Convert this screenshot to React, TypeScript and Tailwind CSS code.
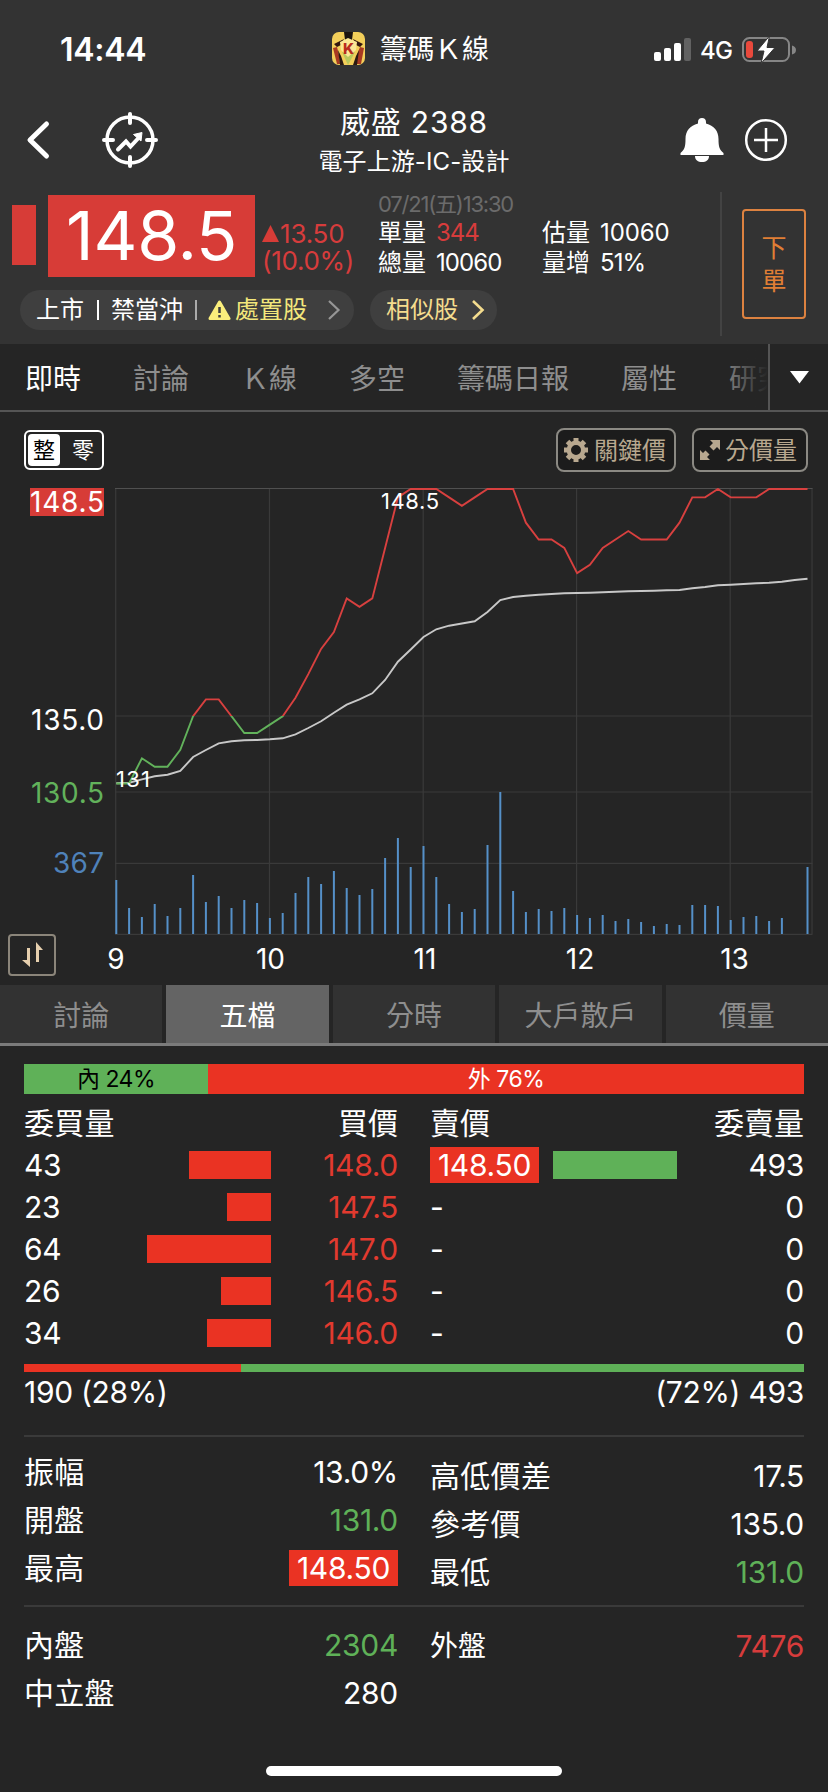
import { useState } from 'react';
import clsx from 'clsx';

const X0 = 116.3;
const STEP = 12.8;

// index 0 is 09:00, one point every five minutes
const prices = [
  131, 131, 132.5, 132, 132, 133, 135, 136, 136, 135, 134, 134, 134.5, 135, 136.1, 137.5, 139, 140,
  142, 141.5, 142, 145, 148, 148.5, 148.5, 148.5, 148, 147.5, 148, 148.5, 148.5, 148.5, 146.5, 145.5,
  145.5, 145, 143.5, 144, 145, 145.5, 146, 145.5, 145.5, 145.5, 146.5, 148, 148, 148.5, 148, 148,
  148, 148.5, 148.5, 148.5, 148.5,
];

const averageY = [
  783.3, 782.7, 779.3, 776.3, 774.7, 771, 757, 750, 743.3, 741.3, 740.3, 740, 739.3, 738.3, 734.3,
  728, 721.3, 712.7, 704.7, 699.3, 693.3, 680, 661.7, 649.5, 637, 629.3, 625.7, 623.5, 621.3, 612,
  600, 597, 595.7, 594.7, 594, 593.3, 593, 592.7, 592.3, 591.7, 591.3, 591, 590.7, 590.3, 590, 588.3,
  587, 585.3, 584.7, 584, 583.3, 582.7, 581.7, 580, 578.7,
];

const volumes = [
  54, 26, 17, 30, 18, 26, 59, 32, 38, 26, 34, 31, 16, 21, 41, 57, 50, 63, 46, 39, 45, 76, 96, 67,
  88, 57, 30, 22, 25, 89, 142, 43, 22, 25, 23, 26, 19, 16, 19, 13, 15, 12, 8, 10, 9, 29, 29, 28, 14,
  17, 18, 13, 16, 0, 67,
];

const mainTabs = ['即時', '討論', 'Ｋ線', '多空', '籌碼日報', '屬性', '研究'];
const subTabs = ['討論', '五檔', '分時', '大戶散戶', '價量'];

const bids = [
  { volume: 43, price: '148.0', bar: 82 },
  { volume: 23, price: '147.5', bar: 44 },
  { volume: 64, price: '147.0', bar: 124 },
  { volume: 26, price: '146.5', bar: 50 },
  { volume: 34, price: '146.0', bar: 64 },
];

const asks = [
  { volume: 493, price: '148.50', bar: 124 },
  { volume: 0, price: '-', bar: 0 },
  { volume: 0, price: '-', bar: 0 },
  { volume: 0, price: '-', bar: 0 },
  { volume: 0, price: '-', bar: 0 },
];

const toX = (i: number) => X0 + i * STEP;
const toY = (price: number) => 489 + (148.5 - price) * 16.83;

function StatusBar() {
  return (
    <div className="flex h-[96px] items-center pl-[60px]">
      <span className="w-[272px] pt-[3px] text-[32px] font-semibold leading-none tracking-[-0.3px]">14:44</span>
      <svg width="33" height="33" viewBox="0 0 33 33">
        <rect width="33" height="33" rx="7" fill="#f3cf5a" />
        <path d="M12 0h9l-1 8h-7z" fill="#1b1410" />
        <path d="M2 12l10-5-3 6-4 2zM31 12L21 7l3 6 4 2z" fill="#33170f" />
        <path d="M1 16l4-1 2 8 1 9H5zM32 16l-4-1-3 8v9h4z" fill="#a83a22" />
        <path d="M6 18l3 6 3 9H8zM27 18l-3 6-3 9h4z" fill="#2b1a12" />
        <path d="M10 20l6 13 7-13z" fill="#b9c85c" />
        <path d="M8 10l8-4 9 4-1 8-8 7-7-7z" fill="#fbe795" />
        <text x="16.5" y="21.5" textAnchor="middle" fontSize="15" fontWeight="800" fill="#b92c1d">K</text>
      </svg>
      <span className="ml-[15px] w-[274px] pt-[2px] text-[27px] leading-none tracking-[0.3px]">籌碼Ｋ線</span>
      <svg className="mt-[3px]" width="38" height="24" viewBox="0 0 38 24">
        <rect x="0" y="14" width="7" height="9" rx="2" fill="#fff" />
        <rect x="10" y="10" width="7" height="13" rx="2" fill="#fff" />
        <rect x="20" y="5" width="7" height="18" rx="2" fill="#fff" />
        <rect x="30" y="0" width="7" height="23" rx="2" fill="#626262" />
      </svg>
      <span className="ml-[8px] mt-[5px] w-[42px] text-[24px] font-medium leading-none tracking-[-0.8px]">4G</span>
      <svg className="mt-[3px]" width="54" height="28" viewBox="0 0 54 28">
        <rect x="1" y="2" width="46" height="23" rx="6.5" fill="none" stroke="#868686" strokeWidth="2" />
        <rect x="4" y="5" width="7" height="17" rx="3" fill="#e9493c" />
        <path d="M50 9.500q4 1 4 4.500t-4 4.500z" fill="#868686" />
        <path d="M27.500 0L15 15h7l-3 12.500 14-16h-8z" fill="#fff" stroke="#333" strokeWidth="1" />
      </svg>
    </div>
  );
}

function NavBar() {
  return (
    <div className="flex h-[96px] items-center">
      <svg className="ml-[25px] mt-[-8px]" width="26" height="40" viewBox="0 0 26 40">
        <path d="M21.500 4L5 20l16.500 16" fill="none" stroke="#fff" strokeWidth="5" strokeLinecap="round" strokeLinejoin="round" />
      </svg>
      <svg className="ml-[51px] mt-[-8px]" width="56" height="56" viewBox="0 0 56 56" fill="none" stroke="#fff">
        <circle cx="28" cy="28" r="23" strokeWidth="3.500" />
        <path d="M28 2v9M28 45v9M2 28h9M45 28h9" strokeWidth="4" strokeLinecap="round" />
        <path d="M16 37.500l8-8 4.500 5 8-8.500" strokeWidth="4" strokeLinecap="round" />
        <path d="M31.500 22.500l8.500-2-1 8.500z" fill="#fff" strokeWidth="1" />
      </svg>
      <div className="ml-[102px] mt-[-4px] flex w-[307px] flex-col items-center">
        <div className="h-[38px] pl-[1px] text-[30px] leading-[38px] tracking-[0.8px]">威盛 2388</div>
        <div className="h-[40px] pl-[1px] text-[24px] leading-[42px] tracking-[0.1px]">電子上游-IC-設計</div>
      </div>
      <svg className="ml-[113px] mt-[-8px]" width="44" height="46" viewBox="0 0 44 46">
        <path d="M22 1c-2.500 0-4 1.500-4 4v1.500C10 8.500 5.500 14 5.500 22c0 8-1 10.500-5 14V38h43v-2c-4-3.500-5-6-5-14 0-8-4.500-13.500-12.500-15.500V5c0-2.500-1.500-4-4-4z" fill="#fff" />
        <path d="M15 39h14c0 4-3 6-7 6s-7-2-7-6z" fill="#fff" />
      </svg>
      <svg className="ml-[20px] mt-[-8px]" width="44" height="44" viewBox="0 0 44 44" fill="none" stroke="#fff" strokeWidth="2.500">
        <circle cx="22" cy="22" r="19.800" />
        <path d="M22 10v24M10 22h24" />
      </svg>
    </div>
  );
}

function Quote() {
  return (
    <div className="flex h-[152px]">
      <div className="w-[720px]">
        <div className="flex h-[98px]">
          <div className="ml-[12px] mt-[13px] h-[60px] w-[24px] bg-[#d73c37]" />
          <div className="ml-[12px] mt-[3px] flex h-[82px] w-[207px] items-center justify-center bg-[#d73c37] pb-[2px] text-[68px] leading-none tracking-[-0.2px]">
            148.5
          </div>
          <div className="ml-[7px] mt-[28px] w-[116px] text-[26px] leading-[27px] text-[#d73c3c]">
            <div className="flex h-[27px] items-center">
              <svg className="mr-[1px] mt-[-1px]" width="17" height="17" viewBox="0 0 17 17">
                <path d="M8.500 0L17 17H0z" fill="#d73c37" />
              </svg>
              <span className="tracking-[-0.2px]">13.50</span>
            </div>
            <div className="tracking-[-0.3px]">(10.0%)</div>
          </div>
          <div className="w-[342px] text-[24px]">
            <div className="h-[26px] text-[22px] leading-[24px] tracking-[-1.2px] text-[#6b6b6b]">07/21(五)13:30</div>
            <div className="flex h-[30px] items-center gap-[10px] leading-none">
              <span>單量</span>
              <span className="w-[94px] tracking-[-1px] text-[#d73c3c]">344</span>
              <span className="ml-[2px]">估量</span>
              <span className="tracking-[-0.1px]">10060</span>
            </div>
            <div className="flex h-[30px] items-center gap-[10px] leading-none">
              <span>總量</span>
              <span className="w-[94px] tracking-[-0.9px]">10060</span>
              <span className="ml-[2px]">量增</span>
              <span className="tracking-[-0.9px]">51%</span>
            </div>
          </div>
        </div>
        <div className="flex h-[40px] text-[24px] leading-none">
          <div className="ml-[20px] flex w-[334px] items-center rounded-full bg-[#3f3f3f] pl-[16px]">
            <span>上市</span>
            <span className="ml-[13px] h-[20px] w-[2px] bg-white" />
            <span className="ml-[12px]">禁當沖</span>
            <span className="ml-[12px] h-[20px] w-[2px] bg-[#aaa]" />
            <svg className="ml-[11px]" width="23" height="21" viewBox="0 0 23 21">
              <path d="M11.500 2L21 18.500H2z" fill="#fbef7c" stroke="#fbef7c" strokeWidth="3" strokeLinejoin="round" />
              <path d="M11.500 7v6M11.500 15v2.500" stroke="#3f3f3f" strokeWidth="2.500" />
            </svg>
            <span className="ml-[4px] text-[#f3e77c]">處置股</span>
            <svg className="ml-[20px]" width="14" height="22" viewBox="0 0 14 22">
              <path d="M2 2l9.500 9L2 20" fill="none" stroke="#969696" strokeWidth="2.200" />
            </svg>
          </div>
          <div className="ml-[16px] flex w-[127px] items-center rounded-full bg-[#3f3f3f] pl-[16px]">
            <span className="text-[#f4dc8e]">相似股</span>
            <svg className="ml-[13px]" width="14" height="22" viewBox="0 0 14 22">
              <path d="M2 2l9.500 9L2 20" fill="none" stroke="#f4dc8e" strokeWidth="2.600" />
            </svg>
          </div>
        </div>
      </div>
      <div className="h-[144px] w-[2px] bg-[#434343]" />
      <button className="ml-[20px] mt-[17px] flex h-[110px] w-[64px] flex-col items-center justify-center rounded-[4px] border-2 border-[#dd8240] pt-[2px] text-[25px] leading-[33px] text-[#e07f35]">
        <span>下</span>
        <span>單</span>
      </button>
    </div>
  );
}

function MainTabs() {
  return (
    <div className="flex h-[68px] border-b-2 border-[#555] text-[28px] text-[#8e8e8e]">
      <div className="relative flex w-[768px] items-center gap-[52px] overflow-hidden pl-[25px] pt-[3px]">
        {mainTabs.map((tab, i) => (
          <span key={tab} className={clsx('shrink-0 leading-none', i === 0 && 'text-white')}>{tab}</span>
        ))}
        <div className="absolute right-0 top-0 h-full w-[48px] bg-gradient-to-r from-transparent to-[#252525]" />
      </div>
      <div className="flex flex-1 items-center border-l-2 border-[#555] pl-[20px]">
        <svg width="19" height="13" viewBox="0 0 19 13">
          <path d="M0 0h19l-9.500 12.500z" fill="#fff" />
        </svg>
      </div>
    </div>
  );
}

function Chart() {
  const points = prices.map((p, i) => `${toX(i)},${toY(p)}`).join(' ');

  return (
    <div>
      <div className="flex h-[76px] items-start pt-[16px] text-[24px] leading-none">
        <div className="ml-[24px] mt-[2px] flex h-[40px] w-[80px] items-center rounded-[6px] border-2 border-white pl-[2px] text-[22px]">
          <span className="flex h-[32px] w-[32px] items-center justify-center rounded-[4px] bg-white text-black">整</span>
          <span className="ml-[12px]">零</span>
        </div>
        <button className="ml-[452px] flex h-[44px] w-[120px] items-center rounded-[8px] border-2 border-[#8b8983] bg-[#1c1c1c] pl-[6px] text-[#b8a88f]">
          <svg width="24" height="24" viewBox="0 0 24 24" fill="none" stroke="#b8a88f">
            <circle cx="12" cy="12" r="7.200" strokeWidth="4.400" />
            <path d="M12 0v4M12 20v4M0 12h4M20 12h4M3.500 3.500l3 3M17.500 17.500l3 3M20.500 3.500l-3 3M6.500 17.500l-3 3" strokeWidth="5" />
          </svg>
          <span className="ml-[6px] pt-[1px]">關鍵價</span>
        </button>
        <button className="ml-[16px] flex h-[44px] w-[116px] items-center rounded-[8px] border-2 border-[#8b8983] bg-[#1c1c1c] pl-[6px] text-[#b8a88f]">
          <svg width="20" height="20" viewBox="0 0 20 20" fill="#b8a88f">
            <path d="M20 0v10l-3-3-3.500 3.500-4-4L13 3l-3-3z" />
            <path d="M0 20V10l3 3 2.500-2.500 4 4L7 17l3 3z" />
          </svg>
          <span className="ml-[5px] pt-[1px]">分價量</span>
        </button>
      </div>
      <svg className="block" width="828" height="497" viewBox="0 488 828 497">
        <defs>
          <clipPath id="above"><rect x="115" y="488" width="700" height="228" /></clipPath>
          <clipPath id="below"><rect x="115" y="716" width="700" height="80" /></clipPath>
        </defs>
        <g stroke="#3a3a3a" strokeWidth="1.200">
          {[115.7, 269.5, 423.2, 576.6, 730.2, 812].map((x) => (
            <line key={x} x1={x} x2={x} y1="488" y2="934" />
          ))}
          {[716, 792, 863.3, 934.3].map((y) => (
            <line key={y} x1="115" x2="812.500" y1={y} y2={y} />
          ))}
          <line x1="115" x2="812.500" y1="488.500" y2="488.500" stroke="#505050" />
        </g>
        {volumes.map((v, i) => (
          <rect key={i} x={toX(i) - 1} y={934 - v} width="2" height={v} fill="#5590c8" />
        ))}
        <polyline points={averageY.map((y, i) => `${toX(i)},${y}`).join(' ')} fill="none" stroke="#c8c8c8" strokeWidth="1.900" />
        <polyline points={points} fill="none" stroke="#d8403f" strokeWidth="1.900" clipPath="url(#above)" />
        <polyline points={points} fill="none" stroke="#62b25b" strokeWidth="1.900" clipPath="url(#below)" />
        <g fill="#fff" fontSize="22">
          <text x="381" y="509" textLength="58">148.5</text>
          <text x="116" y="787" textLength="34">131</text>
        </g>
        <rect x="30" y="488" width="74" height="28" fill="#d73c37" />
        <g fontSize="28" textAnchor="end" fill="#fff">
          <text x="104" y="511.500" textLength="74">148.5</text>
          <text x="104" y="730" textLength="73">135.0</text>
          <text x="104" y="802.500" textLength="73" fill="#62b25b">130.5</text>
          <text x="104" y="873" textLength="51" fill="#4f82ba">367</text>
        </g>
        <g fontSize="28" textAnchor="middle" fill="#fff">
          <text x="116" y="969">9</text>
          <text x="270.500" y="969">10</text>
          <text x="425" y="969">11</text>
          <text x="580" y="969">12</text>
          <text x="734.500" y="969">13</text>
        </g>
        <rect x="9" y="935" width="46" height="40" rx="3" fill="none" stroke="#8b857a" strokeWidth="2" />
        <path d="M27 948h3v19l-8-7h5zM36 962v-20l7 8h-4v12z" fill="#e6cfae" />
      </svg>
    </div>
  );
}

function OrderBook() {
  return (
    <div className="px-[24px] pt-[18px]">
      <div className="flex h-[30px] text-[23px] leading-[31px]">
        <div className="w-[184px] bg-[#5fb158] text-center tracking-[-0.5px] text-black">內 24%</div>
        <div className="flex-1 bg-[#ea3323] text-center tracking-[-0.5px]">外 76%</div>
      </div>
      <div className="mt-[8px] flex h-[42px] items-center text-[30px] leading-none">
        <span className="w-[190px] tracking-[0.2px]">委買量</span>
        <span className="w-[184px] text-right">買價</span>
        <span className="ml-[32px] w-[190px]">賣價</span>
        <span className="flex-1 text-right">委賣量</span>
      </div>
      <div className="flex text-[30px] leading-none tracking-[-0.3px]">
        <div className="w-[374px]">
          {bids.map((row) => (
            <div key={row.price} className="flex h-[42px] items-center">
              <span className="w-[100px]">{row.volume}</span>
              <div className="flex w-[147px] justify-end">
                <div className="h-[28px] bg-[#ea3323]" style={{ width: row.bar }} />
              </div>
              <span className="flex-1 text-right text-[#e23a2f]">{row.price}</span>
            </div>
          ))}
        </div>
        <div className="ml-[32px] w-[374px]">
          {asks.map((row, i) => (
            <div key={i} className="flex h-[42px] items-center">
              <div className="w-[123px]">
                <span className={clsx(row.bar > 0 && 'flex h-[36px] w-[109px] items-center justify-center bg-[#ea3323]')}>
                  {row.price}
                </span>
              </div>
              <div className="h-[28px] bg-[#5fb158]" style={{ width: row.bar }} />
              <span className="flex-1 text-right">{row.volume}</span>
            </div>
          ))}
        </div>
      </div>
      <div className="mt-[10px] flex h-[8px]">
        <div className="w-[217px] bg-[#ea3323]" />
        <div className="flex-1 bg-[#5fb158]" />
      </div>
      <div className="flex h-[42px] items-center justify-between pb-[2px] text-[30px] leading-none tracking-[-0.3px]">
        <span>190 (28%)</span>
        <span>(72%) 493</span>
      </div>
    </div>
  );
}

interface StatProps {
  label: string;
  value: string;
  color?: string;
  filled?: boolean;
}

function Stat({ label, value, color = 'text-white', filled }: StatProps) {
  return (
    <div className="flex h-[48px] items-center justify-between">
      <span className="tracking-[0.3px]">{label}</span>
      <span className={clsx('tracking-[-0.3px]', color, filled && 'flex h-[36px] w-[109px] items-center justify-center bg-[#ea3323]')}>
        {value}
      </span>
    </div>
  );
}

export default function App() {
  const [subTab, setSubTab] = useState('五檔');

  return (
    <div className="flex h-[1792px] w-[828px] flex-col overflow-hidden bg-[#252525] font-['Inter','Noto_Sans_CJK_TC',sans-serif] font-normal text-white">
      <div className="bg-[#333]">
        <StatusBar />
        <NavBar />
        <Quote />
      </div>
      <MainTabs />
      <Chart />
      <div className="flex h-[61px] gap-[4px] border-b-[3px] border-[#7b7b7b] text-[28px] leading-none">
        {subTabs.map((tab) => (
          <button
            key={tab}
            onClick={() => setSubTab(tab)}
            className={clsx(
              'flex flex-1 items-center justify-center pt-[3px]',
              tab === subTab ? 'bg-[#646464] text-white' : 'bg-[#323232] text-[#8e8e8e]'
            )}
          >
            {tab}
          </button>
        ))}
      </div>
      <OrderBook />
      <div className="mx-[24px] mt-[21px] flex h-[170px] gap-[32px] border-t-2 border-[#3a3a3a] text-[30px] leading-none">
        <div className="flex-1 pt-[11px]">
          <Stat label="振幅" value="13.0%" />
          <Stat label="開盤" value="131.0" color="text-[#5fb158]" />
          <Stat label="最高" value="148.50" filled />
        </div>
        <div className="flex-1 pt-[15px]">
          <Stat label="高低價差" value="17.5" />
          <Stat label="參考價" value="135.0" />
          <Stat label="最低" value="131.0" color="text-[#5fb158]" />
        </div>
      </div>
      <div className="mx-[24px] flex h-[161px] gap-[32px] border-t-2 border-[#3a3a3a] pt-[14px] text-[30px] leading-none">
        <div className="flex-1">
          <Stat label="內盤" value="2304" color="text-[#5fb158]" />
          <Stat label="中立盤" value="280" />
        </div>
        <div className="flex-1">
          <div className="flex h-[50px] items-center justify-between">
            <span className="text-[28px]">外盤</span>
            <span className="tracking-[-0.3px] text-[#d73c3c]">7476</span>
          </div>
        </div>
      </div>
      <div className="mx-auto h-[10px] w-[296px] rounded-full bg-white" />
    </div>
  );
}
